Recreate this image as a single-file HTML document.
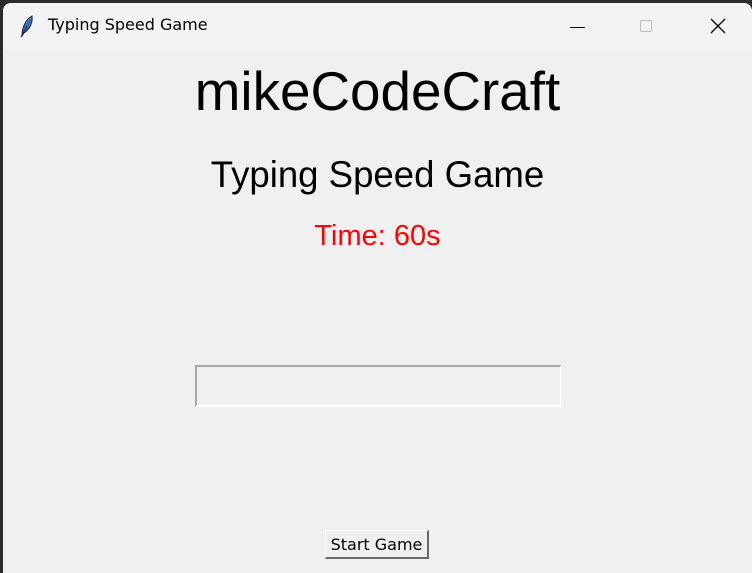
<!DOCTYPE html>
<html><head><meta charset="utf-8"><style>
html,body{margin:0;padding:0;width:752px;height:573px;overflow:hidden;background:#2b2b2b;font-family:"Liberation Sans",sans-serif}
.win{position:absolute;left:3px;top:3px;width:749px;height:570px;background:#f0f0f0;border-top-left-radius:8px;border-top-right-radius:8px;overflow:hidden}
.tb{position:absolute;left:0;top:0;width:100%;height:47px;background:#f3f3f3}
.t{position:absolute;white-space:nowrap;line-height:1}
</style></head><body>
<div class="win">
<div class="tb">
<svg style="position:absolute;left:16px;top:11px" width="16" height="24" viewBox="0 0 16 24"><path d="M3 22 C3 14 6 6 13 2 C14 8 11 15 5 19 Z" fill="#3a6fc0" stroke="#1a2a50" stroke-width="1"/><path d="M2 23 L8 12" stroke="#1a2a50" stroke-width="1"/></svg>
<div class="t" style="left:45px;top:14px;font-family:'DejaVu Sans',sans-serif;font-size:16px;color:#000">Typing Speed Game</div>
<div style="position:absolute;left:567px;top:24px;width:15px;height:1px;background:#000"></div>
<div style="position:absolute;left:637px;top:17px;width:12px;height:12px;border:1px solid #bbb;border-radius:2px;box-sizing:border-box"></div>
<svg style="position:absolute;left:707px;top:15px" width="16" height="16" viewBox="0 0 16 16"><path d="M1 1L15 15M15 1L1 15" stroke="#000" stroke-width="1.3"/></svg>
</div>
<div class="t" style="left:0;width:749px;text-align:center;top:61px;font-size:54.8px;color:#000">mikeCodeCraft</div>
<div class="t" style="left:0;width:749px;text-align:center;top:154px;font-size:36.6px;color:#000">Typing Speed Game</div>
<div class="t" style="left:0;width:749px;text-align:center;top:219px;font-size:29px;color:#ff0000">Time: 60s</div>
<div style="position:absolute;left:192px;top:362px;width:366px;height:42px;box-sizing:border-box;border-top:2px solid #a8a8a8;border-left:2px solid #a8a8a8;border-right:1px solid #fff;border-bottom:2px solid #fff;background:#f0f0f0"></div>
<div style="position:absolute;left:322px;top:527px;width:104px;height:29px;box-sizing:border-box;border-top:1px solid #fff;border-left:1px solid #fff;border-right:2px solid #696969;border-bottom:2px solid #696969;background:#f0f0f0;font-family:'DejaVu Sans',sans-serif;font-size:16px;text-align:center;line-height:27px;color:#000">Start Game</div>
</div>
</body></html>
